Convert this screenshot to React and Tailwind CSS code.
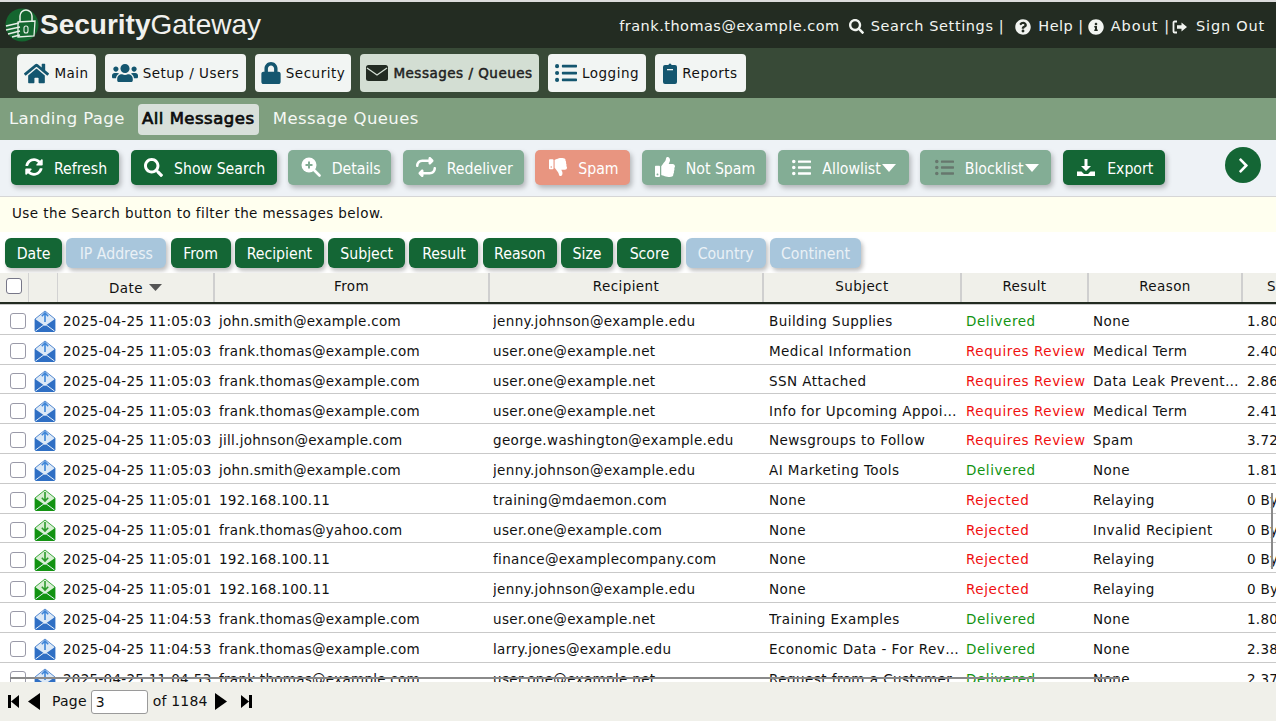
import {
  FaHome, FaUsers, FaLock, FaListUl, FaSearch, FaQuestionCircle, FaInfoCircle,
  FaSyncAlt, FaThumbsDown, FaThumbsUp, FaChevronRight,
} from 'react-icons/fa';
import { FaRepeat } from 'react-icons/fa6';

const RED = 'Requires Review';

const rows = [
  ['up', '2025-04-25 11:05:03', 'john.smith@example.com', 'jenny.johnson@example.edu', 'Building Supplies', 'Delivered', 'None', '1.80 KB'],
  ['up', '2025-04-25 11:05:03', 'frank.thomas@example.com', 'user.one@example.net', 'Medical Information', RED, 'Medical Term', '2.40 KB'],
  ['up', '2025-04-25 11:05:03', 'frank.thomas@example.com', 'user.one@example.net', 'SSN Attached', RED, 'Data Leak Prevention', '2.86 KB'],
  ['up', '2025-04-25 11:05:03', 'frank.thomas@example.com', 'user.one@example.net', 'Info for Upcoming Appointment', RED, 'Medical Term', '2.41 KB'],
  ['up', '2025-04-25 11:05:03', 'jill.johnson@example.com', 'george.washington@example.edu', 'Newsgroups to Follow', RED, 'Spam', '3.72 KB'],
  ['up', '2025-04-25 11:05:03', 'john.smith@example.com', 'jenny.johnson@example.edu', 'AI Marketing Tools', 'Delivered', 'None', '1.81 KB'],
  ['down', '2025-04-25 11:05:01', '192.168.100.11', 'training@mdaemon.com', 'None', 'Rejected', 'Relaying', '0 Bytes'],
  ['down', '2025-04-25 11:05:01', 'frank.thomas@yahoo.com', 'user.one@example.com', 'None', 'Rejected', 'Invalid Recipient', '0 Bytes'],
  ['down', '2025-04-25 11:05:01', '192.168.100.11', 'finance@examplecompany.com', 'None', 'Rejected', 'Relaying', '0 Bytes'],
  ['down', '2025-04-25 11:05:01', '192.168.100.11', 'jenny.johnson@example.edu', 'None', 'Rejected', 'Relaying', '0 Bytes'],
  ['up', '2025-04-25 11:04:53', 'frank.thomas@example.com', 'user.one@example.net', 'Training Examples', 'Delivered', 'None', '1.80 KB'],
  ['up', '2025-04-25 11:04:53', 'frank.thomas@example.com', 'larry.jones@example.edu', 'Economic Data - For Review', 'Delivered', 'None', '2.38 KB'],
  ['up', '2025-04-25 11:04:53', 'frank.thomas@example.com', 'user.one@example.net', 'Request from a Customer', 'Delivered', 'None', '2.37 KB'],
];

const columns = [
  ['Date', true, 'w-[57px]'], ['IP Address', false, 'w-[100px]'], ['From', true, 'w-[60px]'], ['Recipient', true, 'w-[89px]'],
  ['Subject', true, 'w-[77px]'], ['Result', true, 'w-[69px]'], ['Reason', true, 'w-[74px]'], ['Size', true, 'w-[52px]'],
  ['Score', true, 'w-[64px]'], ['Country', false, 'w-[80px]'], ['Continent', false, 'w-[91px]'],
];

const Logo = () => (
  <svg width="34" height="34" viewBox="0 0 34 34" className="shrink-0">
    <circle cx="17" cy="17" r="16.500" fill="#14662f" />
    <path d="M15 14V8a6 6 0 0 1 12 0v6" fill="none" stroke="#e8efe8" strokeWidth="1.500" />
    <path d="M13 14l17-1-1 15-16 1z" fill="none" stroke="#e8efe8" strokeWidth="1.300" />
    <rect x="19" y="18" width="4" height="7" rx="2" fill="none" stroke="#e8efe8" strokeWidth="1.100" />
    <path d="M1 18l13-3M1 22l14-3M3 26l12-3M7 29l8-2" stroke="#e8efe8" strokeWidth="1.300" />
  </svg>
);

const MailIcon = ({ dir }) => {
  const up = dir === 'up';
  const dark = up ? '#2f6fc4' : '#129312';
  const pale = up ? '#dce9f7' : '#d8efd4';
  const arrow = up ? '#3d85d8' : '#2c9c2c';
  return (
    <svg width="22" height="22" viewBox="0 0 22 22" className="shrink-0">
      <path d="M1 9L11 1l10 8v12H1z" fill={pale} stroke={dark} strokeWidth="0.800" />
      <path d="M1 9l10 7 10-7v12a1 1 0 0 1-1 1H2a1 1 0 0 1-1-1z" fill={dark} />
      <path d="M1.500 21l9.500-7 9.500 7" fill="none" stroke="#e8f1fa" strokeWidth="1" />
      {up ? (
        <path d="M11 12V3M7.800 6.200L11 3l3.200 3.200" fill="none" stroke={arrow} strokeWidth="1.600" />
      ) : (
        <path d="M11 3v9M7.800 8.800L11 12l3.200-3.200" fill="none" stroke={arrow} strokeWidth="1.600" />
      )}
    </svg>
  );
};

const NavEnvelope = () => (
  <svg width="22" height="16" viewBox="0 0 22 16" className="shrink-0">
    <rect width="22" height="16" rx="2.500" fill="#222b22" />
    <path d="M1 3l10 7 10-7" fill="none" stroke="#d3ded3" strokeWidth="1.300" />
  </svg>
);

const NavClipboard = () => (
  <svg width="14" height="22" viewBox="0 0 14 22" className="shrink-0">
    <path d="M2 3h3.500a1.500 1.500 0 0 1 3 0H12a2 2 0 0 1 2 2v15a2 2 0 0 1-2 2H2a2 2 0 0 1-2-2V5a2 2 0 0 1 2-2z" fill="#14566f" />
    <rect x="4" y="7" width="6" height="1.300" fill="#f2f5f3" />
  </svg>
);

const ExitIcon = () => (
  <svg width="16" height="14" viewBox="0 0 16 14" className="shrink-0">
    <path d="M5 1.500H2.500a1 1 0 0 0-1 1v9a1 1 0 0 0 1 1H5" fill="none" stroke="#f2f5f1" strokeWidth="1.800" />
    <path d="M5 5.300h4.500V2.500L15 7l-5.500 4.500V8.700H5z" fill="#f2f5f1" />
  </svg>
);

const ExportIcon = () => (
  <svg width="20" height="19" viewBox="0 0 20 19" className="shrink-0">
    <path d="M8.500 1h3v7h3.500L10 13 5 8h3.500z" fill="#fff" />
    <path d="M1 13.500h4.500L8 16h4l2.500-2.500H19V18H1z" fill="#fff" />
  </svg>
);

const DetailsIcon = () => (
  <svg width="20" height="20" viewBox="0 0 20 20" className="shrink-0">
    <circle cx="8" cy="8" r="7.500" fill="#fff" />
    <path d="M8 4.500v7M4.500 8h7" stroke="#83ad95" strokeWidth="2" />
    <path d="M13 13l5.500 5.500" stroke="#fff" strokeWidth="2.600" strokeLinecap="round" />
  </svg>
);

const Caret = () => (
  <svg width="14" height="8" viewBox="0 0 14 8" className="ml-[1px] shrink-0">
    <path d="M0 0h14L7 8z" fill="#fff" />
  </svg>
);

const PagerIcon = ({ d, width, height }) => (
  <svg width={width} height={height} viewBox={`0 0 ${width} ${height}`} className="shrink-0">
    <path d={d} fill="#000" />
  </svg>
);

const ToolButton = ({ icon, label, width, bg, caret }) => (
  <div className={`${width} ${bg} h-[35px] rounded-[5px] flex items-center justify-center gap-[11px] pl-[2px] text-white text-[15.700px] whitespace-nowrap shadow-[2px_3px_5px_rgba(0,0,0,0.25)] font-['DejaVu_Sans_Condensed','DejaVu_Sans',sans-serif]`}>
    {icon}
    <span className="flex items-center pt-[3px]">
      {label}
      {caret && <Caret />}
    </span>
  </div>
);

const NavButton = ({ icon, label, width, active }) => (
  <div
    className={`${width} h-[38px] rounded-[4px] flex items-center justify-center gap-[5px] text-[13.500px] tracking-[0.5px] whitespace-nowrap ${active ? 'bg-[#d3ded3] text-[#222] [-webkit-text-stroke:0.5px_#222]' : 'bg-[#f2f5f3] text-[#111]'}`}
  >
    {icon}
    <span>{label}</span>
  </div>
);

const App = () => {
  return (
    <div className="relative w-[1276px] h-[721px] overflow-hidden bg-white flex flex-col font-['DejaVu_Sans',sans-serif] text-[#111]">
      <div className="h-[2px] bg-[#dcdcdc]" />

      {/* top bar */}
      <div className="h-[46px] bg-[#232c22] flex items-center justify-between pl-[5px] pr-[11px]">
        <div className="flex items-center gap-[1px]">
          <Logo />
          <span className="text-[28px] text-[#f1f1ee] font-['Liberation_Sans',sans-serif]">
            <span className="font-bold">Security</span>Gateway
          </span>
        </div>
        <div className="flex items-center pt-[3px] text-[#f2f5f1] text-[14.500px] tracking-[0.48px] whitespace-nowrap">
          <span>frank.thomas@example.com</span>
          <FaSearch size={15} className="ml-[9px] mr-[7px]" />
          <span className="tracking-[0.6px]">Search Settings |</span>
          <FaQuestionCircle size={16} className="ml-[11px] mr-[7px]" />
          <span>Help |</span>
          <FaInfoCircle size={16} className="ml-[4px] mr-[7px]" />
          <span className="tracking-[1px]">About |</span>
          <span className="ml-[2px] mr-[8px]"><ExitIcon /></span>
          <span className="tracking-[0.8px]">Sign Out</span>
        </div>
      </div>

      {/* main nav */}
      <div className="h-[50px] bg-[#384a37] flex items-center pl-[17px] gap-[9px]">
        <NavButton icon={<FaHome size={25} className="text-[#14566f]" />} label="Main" width="w-[79px]" />
        <NavButton icon={<FaUsers size={26} className="text-[#14566f]" />} label="Setup / Users" width="w-[141px]" />
        <NavButton icon={<FaLock size={22} className="text-[#14566f] -mx-[1px]" />} label="Security" width="w-[96px]" />
        <NavButton icon={<NavEnvelope />} label="Messages / Queues" width="w-[179px]" active />
        <NavButton icon={<FaListUl size={22} className="text-[#14566f]" />} label="Logging" width="w-[98px]" />
        <NavButton icon={<NavClipboard />} label="Reports" width="w-[91px]" />
      </div>

      {/* sub nav */}
      <div className="h-[42px] bg-[#7f9f7f] flex items-center pl-[9px] text-[16.500px] tracking-[0.4px] text-[#f5f8f4] whitespace-nowrap">
        <span>Landing Page</span>
        <span className="ml-[13px] h-[31px] w-[121px] rounded-[4px] bg-[#d8e0da] flex items-center justify-center text-[16.500px] tracking-[0.5px] text-[#0c0c0c] [-webkit-text-stroke:0.7px_#0c0c0c]">All Messages</span>
        <span className="ml-[14px]">Message Queues</span>
      </div>

      {/* toolbar */}
      <div className="h-[57px] shrink-0 bg-[#eef2f6] border-b border-[#d6d6d6] flex items-center pl-[11px] pb-[2px] relative">
        <div className="flex items-center gap-[11.600px]">
          <ToolButton icon={<FaSyncAlt size={18} />} label="Refresh" width="w-[108px]" bg="bg-[#146635]" />
          <ToolButton icon={<FaSearch size={19} />} label="Show Search" width="w-[146px]" bg="bg-[#146635]" />
          <ToolButton icon={<DetailsIcon />} label="Details" width="w-[103px]" bg="bg-[#83ad95]" />
          <ToolButton icon={<FaRepeat size={20} />} label="Redeliver" width="w-[121px]" bg="bg-[#83ad95]" />
          <ToolButton icon={<FaThumbsDown size={18} />} label="Spam" width="w-[95px]" bg="bg-[#e89580]" />
          <ToolButton icon={<FaThumbsUp size={20} />} label="Not Spam" width="w-[124px]" bg="bg-[#83ad95]" />
          <ToolButton icon={<FaListUl size={19} />} label="Allowlist" width="w-[131px]" bg="bg-[#83ad95]" caret />
          <ToolButton icon={<FaListUl size={19} className="text-[#67776d]" />} label="Blocklist" width="w-[131px]" bg="bg-[#83ad95]" caret />
          <ToolButton icon={<ExportIcon />} label="Export" width="w-[102px]" bg="bg-[#146635]" />
        </div>
        <div className="absolute left-[1225px] top-[7px] w-[36px] h-[36px] rounded-full bg-[#146635] flex items-center justify-center text-white">
          <FaChevronRight size={17} />
        </div>
      </div>

      {/* hint */}
      <div className="h-[35px] shrink-0 bg-[#ffffef] flex items-center pl-[12px] pb-[2px] text-[13.500px] tracking-[0.42px]">
        Use the Search button to filter the messages below.
      </div>

      {/* column toggles */}
      <div className="h-[41px] shrink-0 flex items-center pl-[5px] gap-[4.300px] pt-[1px]">
        {columns.map(([label, on, width]) => (
          <div
            key={label}
            className={`${width} h-[30px] pt-[1px] rounded-[6px] flex items-center justify-center text-[15.700px] whitespace-nowrap font-['DejaVu_Sans_Condensed','DejaVu_Sans',sans-serif] shadow-[2px_3px_4px_rgba(0,0,0,0.25)] ${on ? 'bg-[#146635] text-white' : 'bg-[#a8c6dc] text-[#eaf1f6]'}`}
          >
            {label}
          </div>
        ))}
      </div>

      {/* table header */}
      <div className="h-[31px] shrink-0 bg-[#f0f0ea] border-b-2 border-[#232c22] grid grid-cols-[29px_29px_157px_275px_274px_198px_127px_154px_33px] text-[13.500px] tracking-[0.4px] text-center leading-[26px]">
        <div className="flex items-center justify-center border-r border-[#d2d2d2]">
          <span className="w-[16px] h-[16px] bg-white border border-[#777788] rounded-[3px] mb-[3px]" />
        </div>
        <div className="border-r border-[#d2d2d2]" />
        <div className="border-r-2 border-[#cfcfcf] flex items-center justify-center gap-[6px]">
          Date
          <svg width="13" height="7" viewBox="0 0 13 7"><path d="M0 0h13L6.500 7z" fill="#555" /></svg>
        </div>
        <div className="border-r-2 border-[#cfcfcf]">From</div>
        <div className="border-r-2 border-[#cfcfcf]">Recipient</div>
        <div className="border-r-2 border-[#cfcfcf]">Subject</div>
        <div className="border-r-2 border-[#cfcfcf]">Result</div>
        <div className="border-r-2 border-[#cfcfcf]">Reason</div>
        <div className="text-left pl-[24px] overflow-hidden whitespace-nowrap">Size</div>
      </div>

      {/* rows */}
      <div className="flex-1 min-h-0 overflow-hidden border-t border-[#c9c9c9] pt-[0.100px]">
        {rows.map((row, i) => {
          const [dir, date, from, to, subject, result, reason, size] = row;
          const color = result === 'Delivered' ? 'text-[#129312]' : 'text-[#f01010]';
          return (
            <div
              key={i}
              className="h-[29.800px] border-b border-[#c9c9c9] grid grid-cols-[34px_29px_156px_274px_276px_197px_127px_154px_29px] items-center pt-[3.500px] text-[13.500px] tracking-[0.27px] whitespace-nowrap"
            >
              <div className="flex justify-center pl-[1px]">
                <span className="w-[16px] h-[16px] bg-white border border-[#9a9aa8] rounded-[3px]" />
              </div>
              <div><MailIcon dir={dir} /></div>
              <div>{date}</div>
              <div>{from}</div>
              <div className="overflow-hidden text-ellipsis pr-[6px] tracking-[0.34px]">{to}</div>
              <div className="overflow-hidden text-ellipsis pr-[5px] tracking-[0.45px]">{subject}</div>
              <div className={`${color} tracking-[0.57px]`}>{result}</div>
              <div className="overflow-hidden text-ellipsis pr-[6px] tracking-[0.47px]">{reason}</div>
              <div className="overflow-hidden">{size}</div>
            </div>
          );
        })}
      </div>

      {/* pager */}
      <div className="h-[39px] shrink-0 bg-[#f0f0ea] flex items-center pl-[8px] text-[14px] tracking-[0.2px]">
        <PagerIcon width={11} height={13} d="M0 0h3v13H0zM3 6.500L11 0v13z" />
        <span className="ml-[9px]"><PagerIcon width={12} height={17} d="M0 8.500L12 0v17z" /></span>
        <span className="ml-[12px]">Page</span>
        <span className="ml-[4px] w-[57px] h-[24px] bg-white border border-[#9a9a9a] rounded-[3px] pl-[4px] leading-[22px]">3</span>
        <span className="ml-[5px]">of 1184</span>
        <span className="ml-[7px]"><PagerIcon width={12} height={17} d="M12 8.500L0 0v17z" /></span>
        <span className="ml-[14px]"><PagerIcon width={11} height={13} d="M8 0h3v13H8zM8 6.500L0 0v13z" /></span>
      </div>

      {/* stray scroll marks left over the grid */}
      <div className="absolute left-[10px] top-[677px] w-[1110px] h-[1.500px] bg-[#8a8a8a]" />
      <div className="absolute left-[1271px] top-[493px] w-[2px] h-[76px] bg-[#8a8a8a]" />
    </div>
  );
};

export default App;
